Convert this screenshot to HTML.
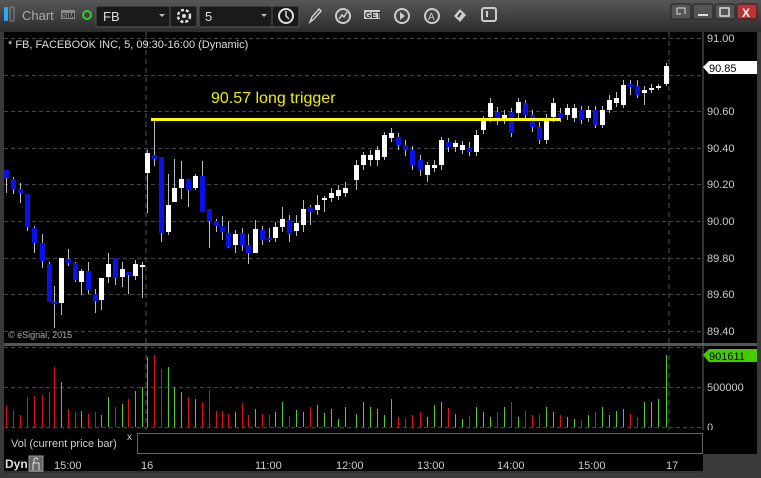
<!DOCTYPE html>
<html><head><meta charset="utf-8"><style>
body{margin:0;width:761px;height:478px;overflow:hidden;background:#3a3a3a;font-family:"Liberation Sans",sans-serif;}
svg{display:block}
text{font-family:"Liberation Sans",sans-serif}
</style></head><body>
<svg id="s" width="761" height="478" xmlns="http://www.w3.org/2000/svg">
<defs><linearGradient id="tb" x1="0" y1="0" x2="0" y2="1"><stop offset="0" stop-color="#575757"/><stop offset="1" stop-color="#2c2c2c"/></linearGradient></defs>
<rect x="0" y="0" width="761" height="478" fill="#3a3a3a"/>
<rect x="0" y="0" width="761" height="32" fill="url(#tb)"/>
<rect x="4" y="7" width="4" height="14" rx="1" fill="#2aa7ff"/>
<rect x="10" y="7" width="4" height="14" rx="1" fill="none" stroke="#888"/>
<text x="22" y="20" fill="#aaa" font-size="13">Chart</text>
<rect x="61" y="10" width="14" height="9" fill="#888"/><text x="62" y="18" font-size="7" fill="#222" font-weight="bold">SIM</text>
<circle cx="87" cy="15" r="4" fill="none" stroke="#3c3" stroke-width="2"/>
<rect x="96" y="6" width="101" height="21" rx="2" fill="#1a1a1a" stroke="#555"/>
<text x="103" y="21" fill="#ddd" font-size="13">FB</text>
<path d="M159 14l3 3 3-3z" fill="#bbb"/>
<line x1="170" y1="6" x2="170" y2="27" stroke="#555"/>
<circle cx="184" cy="16" r="6" fill="none" stroke="#ddd" stroke-width="2.5" stroke-dasharray="3 2"/><circle cx="184" cy="16" r="2" fill="#ddd"/>
<rect x="199" y="6" width="100" height="21" rx="2" fill="#1a1a1a" stroke="#555"/>
<text x="205" y="21" fill="#ddd" font-size="13">5</text>
<path d="M181 14l3 3 3-3z" fill="#bbb" transform="translate(80,0)"/>
<line x1="272" y1="6" x2="272" y2="27" stroke="#555"/>
<circle cx="286" cy="16" r="7" fill="none" stroke="#ddd" stroke-width="2"/><path d="M286 11v5l3 3" stroke="#ddd" stroke-width="1.5" fill="none"/>
<path d="M310 22l2-5 7-8 2 2-7 8z" fill="none" stroke="#ccc" stroke-width="1.5"/>
<circle cx="343" cy="16" r="7" fill="none" stroke="#ccc" stroke-width="2"/><path d="M339 19l3-4 2 2 3-5" stroke="#ccc" fill="none" stroke-width="1.5"/>
<rect x="364" y="10" width="16" height="9" fill="#ccc"/><text x="365" y="18" font-size="8" font-weight="bold" fill="#222">GET</text>
<circle cx="402" cy="16" r="7" fill="none" stroke="#ccc" stroke-width="2"/><path d="M400 12v8l5-4z" fill="#ccc"/>
<circle cx="432" cy="16" r="7" fill="none" stroke="#ccc" stroke-width="2"/><text x="428" y="20" font-size="10" fill="#ccc">A</text>
<path d="M454 16l6-7 6 6-6 7z" fill="#ccc"/><path d="M458 17l3-4" stroke="#333" stroke-width="2"/>
<rect x="482" y="8" width="14" height="13" rx="2" fill="none" stroke="#ccc" stroke-width="2"/><line x1="487" y1="11" x2="487" y2="17" stroke="#ccc" stroke-width="2"/>
<rect x="671" y="4" width="20" height="15" rx="2" fill="#555" stroke="#222"/><rect x="693" y="4" width="20" height="15" rx="2" fill="#555" stroke="#222"/><rect x="715" y="4" width="20" height="15" rx="2" fill="#555" stroke="#222"/>
<rect x="737" y="4" width="20" height="15" rx="2" fill="#b33" stroke="#222"/>
<path d="M677 8h8v6M677 8v6h4" stroke="#ddd" fill="none"/><line x1="698" y1="15" x2="708" y2="15" stroke="#ddd" stroke-width="2"/>
<rect x="720" y="8" width="9" height="8" fill="none" stroke="#ddd" stroke-width="1.5"/>
<text x="742" y="17" fill="#fff" font-size="12" font-weight="bold">X</text>
<rect x="4" y="32" width="753" height="311" fill="#000"/>
<rect x="4" y="346" width="753" height="84" fill="#000"/>
<rect x="4" y="343" width="753" height="3" fill="#555"/>
<g id="grid" stroke="#444" stroke-dasharray="4 3"></g>
<line x1="703" y1="32" x2="703" y2="430" stroke="#666"/>
<line x1="146" y1="32" x2="146" y2="343" stroke="#555" stroke-dasharray="5 4"/>
<line x1="669" y1="32" x2="669" y2="343" stroke="#555" stroke-dasharray="5 4"/>
<line x1="146" y1="346" x2="146" y2="430" stroke="#555" stroke-dasharray="5 4"/>
<line x1="669" y1="346" x2="669" y2="430" stroke="#555" stroke-dasharray="5 4"/>
<g id="c"></g>
<g id="v"></g>
<text x="8" y="48" fill="#ddd" font-size="11">* FB, FACEBOOK INC, 5, 09:30-16:00 (Dynamic)</text>
<text x="211" y="103" fill="#ee0" font-size="16">90.57 long trigger</text>
<rect x="151" y="118" width="409" height="3" fill="#ff0"/>
<text x="8" y="338" fill="#aaa" font-size="9">© eSignal, 2015</text>
<g fill="#ccc" font-size="11" id="ax"></g>
<path d="M703 67l6-6h48v13h-48z" fill="#fff"/><text x="709" y="72" fill="#000" font-size="11">90.85</text>
<path d="M703 355l6-6h48v13h-48z" fill="#4c0"/><text x="709" y="360" fill="#000" font-size="11">901611</text>
<text x="707" y="391" fill="#ccc" font-size="11">500000</text>
<text x="707" y="431" fill="#ccc" font-size="11">0</text>
<rect x="4" y="430" width="753" height="24" fill="#000"/>
<text x="11" y="447" fill="#ccc" font-size="11">Vol (current price bar)</text>
<text x="127" y="440" fill="#ccc" font-size="10">x</text>
<rect x="137.5" y="433.5" width="565" height="20" fill="#000" stroke="#666"/>
<rect x="4" y="454" width="699" height="19" fill="#000"/>
<line x1="4" y1="472" x2="703" y2="472" stroke="#666"/>
<text x="5" y="468" fill="#ddd" font-size="12" font-weight="bold">Dyn</text>
<rect x="29" y="456" width="14" height="15" fill="#666" stroke="#999"/><path d="M33 470v-7h6v7M34 463v-3a2 2 0 0 1 4 0" stroke="#ddd" fill="none"/>
<g fill="#ccc" font-size="11"><text x="54" y="469">15:00</text><text x="141" y="469">16</text><text x="255" y="469">11:00</text><text x="336" y="469">12:00</text><text x="417" y="469">13:00</text><text x="497" y="469">14:00</text><text x="578" y="469">15:00</text><text x="666" y="469">17</text></g>
</svg>
<script>
var NS="http://www.w3.org/2000/svg";
function el(p,t,a){var e=document.createElementNS(NS,t);for(var k in a)e.setAttribute(k,a[k]);p.appendChild(e);return e;}
var g=document.getElementById('grid');
[38,75,111,148,184,221,258,294,331].forEach(function(y){el(g,'line',{x1:4,y1:y+.5,x2:703,y2:y+.5});});
[347,387,427].forEach(function(y){el(g,'line',{x1:4,y1:y+.5,x2:703,y2:y+.5});});
var ax=document.getElementById('ax');
var labs=["91.00","90.80","90.60","90.40","90.20","90.00","89.80","89.60","89.40"];
[38,75,111,148,184,221,258,294,331].forEach(function(y,i){if(i==1)return;var t=el(ax,'text',{x:707,y:y+4});t.textContent=labs[i];});
var C=[[6,170,178,170,193,0],[13,179,189,177,194,0],[20,189,193,183,203,0],[27,194,227,194,231,0],[34,228,243,226,253,0],[42,243,261,234,268,0],[49,264,302,262,302,0],[54,302,304,286,328,0],[61,258,303,258,315,1],[68,259,263,249,266,0],[75,263,280,262,282,0],[81,271,282,269,295,1],[88,271,290,262,294,0],[95,294,301,289,313,0],[101,278,300,289,310,1],[108,264,277,253,283,1],[115,258,278,258,285,0],[122,269,277,262,287,1],[128,272,275,272,294,0],[135,264,276,260,280,1],[142,265,267,262,298,1],
[147,153,173,150,213,1],[154,155,159,120,166,0],[161,157,233,157,242,0],[168,205,232,174,235,1],[174,188,202,159,199,1],[181,179,188,161,199,1],[188,179,190,179,207,0],[195,176,188,174,190,1],[202,176,212,161,212,0],[209,209,221,209,248,0],[216,221,226,219,232,0],[222,226,232,216,240,0],[228,233,247,221,248,0],[235,234,245,230,253,1],[242,233,245,228,251,0],[248,245,253,234,264,0],[255,229,253,220,253,1],[262,230,240,226,245,0],[269,238,240,228,242,0],[275,227,238,222,242,1],[282,219,227,207,232,1],[289,220,234,215,242,0],[296,223,231,215,236,1],[303,209,225,200,232,1],[310,207,212,205,225,0],[317,205,210,195,215,1],[324,198,200,196,212,1],
[331,193,198,188,202,1],[338,190,196,185,200,1],[345,188,193,182,197,1],[356,165,180,160,190,1],[363,155,165,152,170,1],[370,155,160,150,166,1],[377,150,160,146,166,1],[384,135,157,132,160,1],[391,133,138,128,142,1],[398,137,145,133,150,0],[405,145,150,140,156,0],[412,150,165,146,170,0],[420,160,170,155,176,0],[427,165,175,162,182,1],[434,165,168,160,172,1],[441,140,165,137,170,1],[448,142,147,138,152,0],[455,143,147,140,152,1],[462,145,150,141,154,1],[469,148,152,142,156,0],[476,135,152,130,156,1],[483,120,130,116,134,1],[490,103,117,98,122,1],[497,112,120,107,125,0],[504,115,120,110,124,1],[511,112,133,108,137,0],[518,102,113,98,118,1],[525,103,115,100,120,0],[532,115,127,110,132,0],[539,127,140,122,144,0],[546,118,140,114,144,1],[553,103,117,98,122,1],[560,113,118,108,122,0],[567,108,115,104,120,1],[574,108,118,104,122,1],[581,110,120,106,124,0],[588,110,118,106,122,1],[595,110,125,106,128,0],[602,110,125,106,128,1],[609,100,110,95,113,1],[616,98,103,92,107,1],[623,85,105,80,108,1],[630,84,87,80,95,0],[637,86,95,80,98,0],[644,90,93,86,105,1],[651,88,90,84,93,1],[658,86,88,84,90,1],[666,66,84,63,86,1]];
var V=[21,17,12,30,31,32,35,60,45,18,15,16,13,15,12,30,20,23,28,36,40,
70,72,58,60,40,35,30,28,25,37,16,16,13,15,24,12,18,13,12,15,25,11,17,15,20,22,14,18,8,20,
13,25,20,18,12,28,10,9,12,15,10,22,25,19,13,8,11,20,15,10,15,20,25,10,16,12,13,20,15,12,10,8,7,12,15,20,12,16,18,13,10,25,28,72];
V[C.length-1]=72;V[C.length-2]=28;V[C.length-3]=25;
var c=document.getElementById('c'),v=document.getElementById('v');
C.forEach(function(d,i){var col=d[5]?'#fff':'#0a10e8';
el(c,'line',{x1:d[0]+.5,y1:d[3],x2:d[0]+.5,y2:d[4],stroke:'#bbb'});
el(c,'rect',{x:d[0]-2,y:d[1],width:5,height:Math.max(2,d[2]-d[1]),fill:col});
var h=V[i]||15;el(v,'line',{x1:d[0]+.5,y1:427-h,x2:d[0]+.5,y2:427,stroke:d[5]?'#5c2':'#d11'});});
</script>
</body></html>
